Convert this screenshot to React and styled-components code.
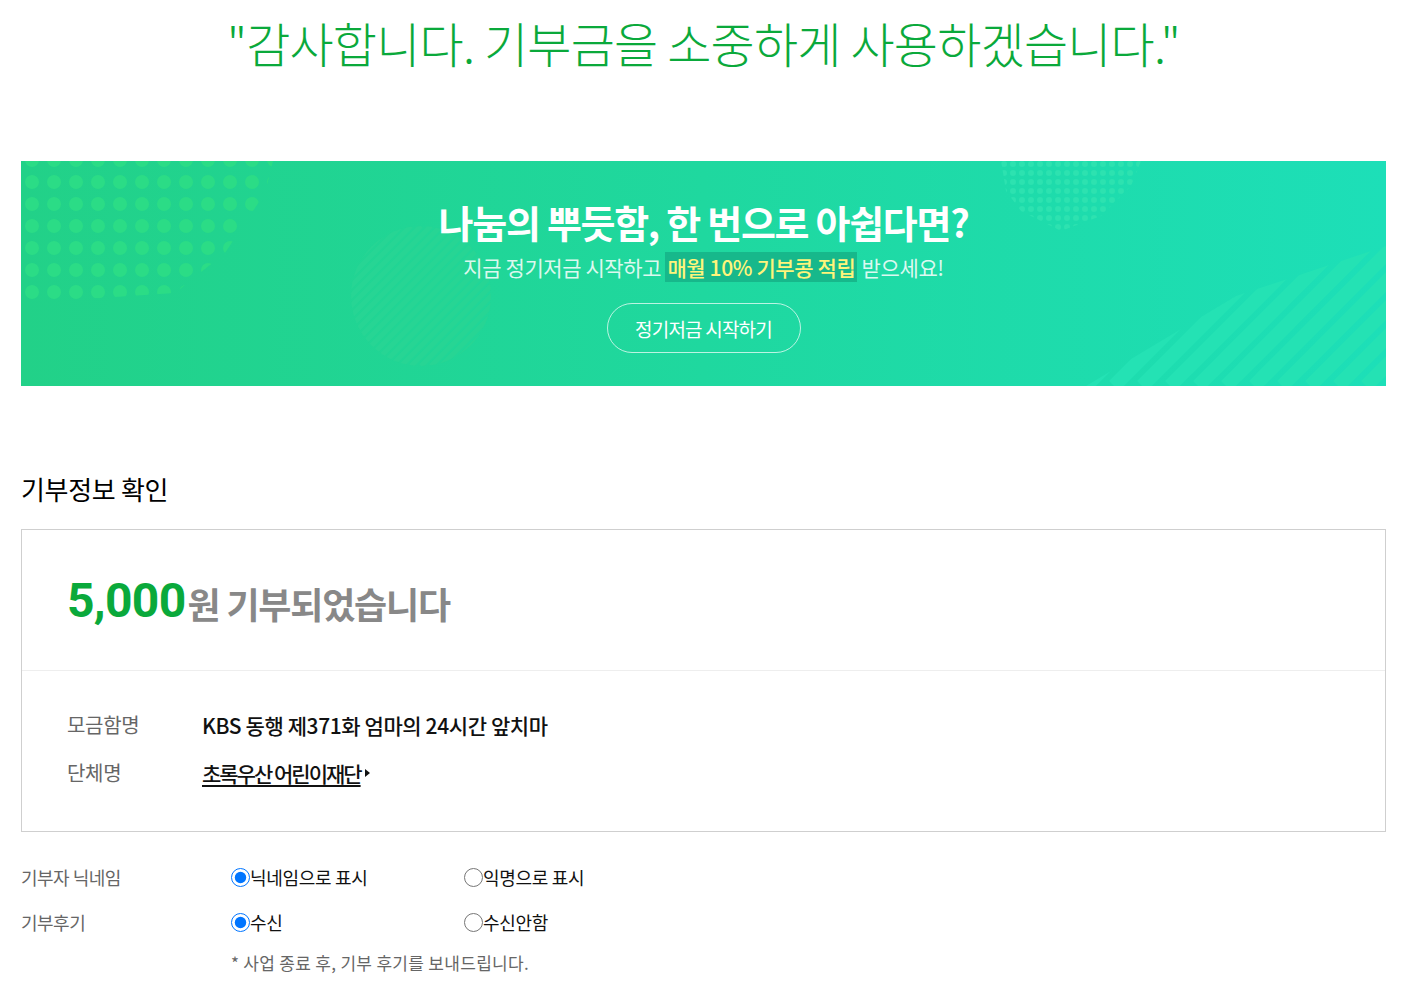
import React from 'react';
import styled, { createGlobalStyle } from 'styled-components';

const GlobalStyle = createGlobalStyle`
  body {
    margin: 0;
    background: #fff;
    font-family: "Noto Sans CJK KR", "Noto Sans", sans-serif;
  }
`;

const Page = styled.div`
  padding: 0 21px 20px 21px;
`;

const Thanks = styled.h1`
  margin: 0;
  padding-top: 10px;
  height: 151px;
  text-align: center;
  font-size: 48px;
  font-weight: 300;
  letter-spacing: -0.8px;
  color: #0aa93b;
  line-height: 64px;
`;

const Banner = styled.div`
  position: relative;
  overflow: hidden;
  height: 225px;
  background: linear-gradient(90deg, #22d188 0%, #1fd89f 50%, #1ddfb8 100%);
  display: flex;
  flex-direction: column;
  align-items: center;
  color: #fff;
`;

const Deco = styled.svg`
  position: absolute;
  pointer-events: none;
`;

const BannerTitle = styled.div`
  position: relative;
  margin-top: 36px;
  font-size: 38px;
  font-weight: 700;
  letter-spacing: -1.3px;
  line-height: 50px;
`;

const BannerSub = styled.div`
  position: relative;
  margin-top: 7px;
  font-size: 21px;
  letter-spacing: -0.4px;
  color: rgba(255, 255, 255, 0.85);
  line-height: 26px;
`;

const Mark = styled.span`
  background: #17b88b;
  color: #fff47a;
  font-weight: 500;
  padding: 0 2px;
`;

const PillButton = styled.button`
  position: relative;
  margin-top: 23px;
  width: 194px;
  height: 50px;
  border-radius: 25px;
  border: 1.5px solid rgba(255, 255, 255, 0.7);
  background: transparent;
  color: #fff;
  font-family: inherit;
  font-size: 19px;
  letter-spacing: -0.8px;
`;

const SectionTitle = styled.h2`
  margin: 86px 0 23px 0;
  font-size: 26px;
  font-weight: 400;
  color: #000;
  letter-spacing: -0.3px;
  line-height: 34px;
`;

const InfoBox = styled.div`
  border: 1px solid #cfcfcf;
`;

const AmountRow = styled.div`
  height: 140px;
  display: flex;
  align-items: center;
  padding: 0 45px;
  border-bottom: 1px solid #eee;
`;

const Amount = styled.span`
  font-family: Roboto, "Noto Sans", sans-serif;
  font-weight: 700;
  font-size: 48px;
  color: #0aa93b;
  letter-spacing: -0.7px;
`;

const AmountText = styled.span`
  font-size: 36px;
  font-weight: 700;
  color: #888;
  letter-spacing: -1.2px;
  margin-left: 2px;
  margin-top: 6px;
`;

const DetailList = styled.div`
  padding: 39px 45px 43px 45px;
  display: grid;
  grid-template-columns: 135px 1fr;
  row-gap: 18px;
  line-height: 30px;
`;

const DetailLabel = styled.div`
  font-size: 20px;
  color: #666;
  letter-spacing: -0.3px;
`;

const DetailValue = styled.div`
  font-size: 21px;
  color: #111;
  font-weight: 500;
  letter-spacing: -0.4px;
  display: flex;
  align-items: center;
`;

const OrgLink = styled.a`
  color: #111;
  text-decoration: underline;
  text-underline-offset: 3px;
  letter-spacing: -2px;
`;

const Caret = styled.span`
  width: 0;
  height: 0;
  margin-left: 4px;
  border-left: 5px solid #111;
  border-top: 4px solid transparent;
  border-bottom: 4px solid transparent;
`;

const OptionList = styled.div`
  margin-top: 32px;
  display: grid;
  grid-template-columns: 210px 233px 1fr;
  row-gap: 19px;
  line-height: 26px;
  align-items: center;
`;

const OptionLabel = styled.div`
  font-size: 18px;
  color: #666;
  letter-spacing: -0.5px;
`;

const Radio = styled.label`
  display: flex;
  align-items: center;
  font-size: 18px;
  color: #111;
  letter-spacing: -0.3px;

  input {
    margin: 0;
    width: 19px;
    height: 19px;
  }
`;

const Note = styled.div`
  grid-column: 2 / 4;
  margin-top: -4px;
  font-size: 17px;
  color: #666;
  letter-spacing: 0.3px;
`;

function Dots({ cols, rows, gap, r, color }) {
  const items = [];
  for (let y = 0; y < rows; y++) {
    for (let x = 0; x < cols; x++) {
      items.push(<circle key={`${x}-${y}`} cx={x * gap + r} cy={y * gap + r} r={r} fill={color} />);
    }
  }
  return items;
}

function Stripes({ w, h, step, color }) {
  const lines = [];
  for (let i = -h; i < w; i += step) {
    lines.push(<line key={i} x1={i} y1={h} x2={i + h} y2={0} stroke={color} strokeWidth={step / 2} />);
  }
  return lines;
}

export default function App() {
  return (
    <>
      <GlobalStyle />
      <Page>
        <Thanks>"감사합니다. 기부금을 소중하게 사용하겠습니다."</Thanks>

        <Banner>
          <Deco width="250" height="150" style={{ left: 4, top: -8 }}>
            <defs>
              <clipPath id="dotclip">
                <path d="M0 0 H250 L240 40 L200 100 L150 140 L0 150 Z" />
              </clipPath>
            </defs>
            <g clipPath="url(#dotclip)">
              <Dots cols={12} rows={7} gap={22} r={7} color="#2bdc86" />
            </g>
          </Deco>
          <Deco width="140" height="70" style={{ left: 980, top: 0 }}>
            <defs>
              <clipPath id="dotclip2">
                <path d="M0 0 H140 L130 25 L100 55 L60 70 L20 50 L5 30 Z" />
              </clipPath>
            </defs>
            <g clipPath="url(#dotclip2)">
              <Dots cols={16} rows={9} gap={9} r={3} color="#2de2b0" />
            </g>
          </Deco>
          <Deco width="140" height="140" style={{ left: 330, top: 65 }}>
            <defs>
              <clipPath id="circ1">
                <circle cx="70" cy="70" r="70" />
              </clipPath>
            </defs>
            <g clipPath="url(#circ1)">
              <Stripes w={140} h={140} step={10} color="#27d594" />
            </g>
          </Deco>
          <Deco width="300" height="140" style={{ right: 0, bottom: 0 }}>
            <defs>
              <clipPath id="tri1">
                <path d="M0 140 L150 50 L300 0 V140 Z" />
              </clipPath>
            </defs>
            <g clipPath="url(#tri1)">
              <Stripes w={300} h={140} step={28} color="#24e2b4" />
            </g>
          </Deco>

          <BannerTitle>나눔의 뿌듯함, 한 번으로 아쉽다면?</BannerTitle>
          <BannerSub>
            지금 정기저금 시작하고 <Mark>매월 10% 기부콩 적립</Mark> 받으세요!
          </BannerSub>
          <PillButton type="button">정기저금 시작하기</PillButton>
        </Banner>

        <SectionTitle>기부정보 확인</SectionTitle>

        <InfoBox>
          <AmountRow>
            <Amount>5,000</Amount>
            <AmountText>원 기부되었습니다</AmountText>
          </AmountRow>
          <DetailList>
            <DetailLabel>모금함명</DetailLabel>
            <DetailValue>KBS 동행 제371화 엄마의 24시간 앞치마</DetailValue>
            <DetailLabel>단체명</DetailLabel>
            <DetailValue>
              <OrgLink href="#">초록우산 어린이재단</OrgLink>
              <Caret />
            </DetailValue>
          </DetailList>
        </InfoBox>

        <OptionList>
          <OptionLabel>기부자 닉네임</OptionLabel>
          <Radio>
            <input type="radio" name="nick" defaultChecked />
            닉네임으로 표시
          </Radio>
          <Radio>
            <input type="radio" name="nick" />
            익명으로 표시
          </Radio>
          <OptionLabel>기부후기</OptionLabel>
          <Radio>
            <input type="radio" name="review" defaultChecked />
            수신
          </Radio>
          <Radio>
            <input type="radio" name="review" />
            수신안함
          </Radio>
          <Note>* 사업 종료 후, 기부 후기를 보내드립니다.</Note>
        </OptionList>
      </Page>
    </>
  );
}
